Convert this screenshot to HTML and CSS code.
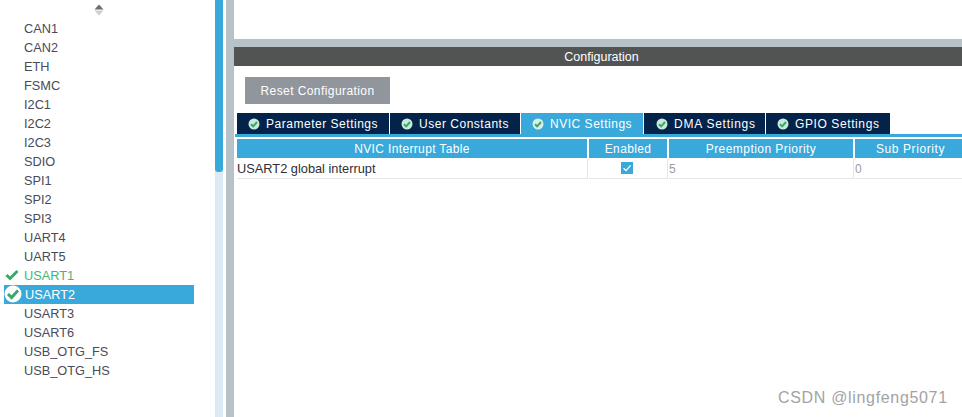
FILE: index.html
```html
<!DOCTYPE html>
<html lang="en">
<head>
<meta charset="utf-8">
<title>Configuration</title>
<link rel="stylesheet" href="styles.css">
</head>
<body>
<div class="app">
  <aside class="sidebar">
    <div class="sorter">
      <svg width="10" height="12" viewBox="0 0 10 12"><path d="M5 0.5 9.5 5.5H0.5z" fill="#6f6f6f"/><path d="M5 11.5 0.5 6.5h9z" fill="#cfcfcf"/></svg>
    </div>
    <ul class="list">
      <li class="item">CAN1</li>
      <li class="item">CAN2</li>
      <li class="item">ETH</li>
      <li class="item">FSMC</li>
      <li class="item">I2C1</li>
      <li class="item">I2C2</li>
      <li class="item">I2C3</li>
      <li class="item">SDIO</li>
      <li class="item">SPI1</li>
      <li class="item">SPI2</li>
      <li class="item">SPI3</li>
      <li class="item">UART4</li>
      <li class="item">UART5</li>
      <li class="item ok">
        <svg class="tick" width="14" height="12" viewBox="0 0 14 12"><path d="M1.5 6 5 9.5 12.5 2" fill="none" stroke="#3aa76d" stroke-width="3"/></svg>
        USART1
      </li>
      <li class="item selected">
        <svg class="badge" width="18" height="18" viewBox="0 0 18 18"><circle cx="9" cy="9" r="8.5" fill="#fff"/><path d="M4 9 7.6 12.6 14 5.6" fill="none" stroke="#3aa76d" stroke-width="3"/></svg>
        USART2
      </li>
      <li class="item">USART3</li>
      <li class="item">USART6</li>
      <li class="item">USB_OTG_FS</li>
      <li class="item">USB_OTG_HS</li>
    </ul>
  </aside>
  <div class="scrolltrack"><div class="scrollthumb"></div></div>
  <div class="gutter"></div>
  <div class="divider"></div>
  <main class="main">
    <div class="top"></div>
    <div class="band"></div>
    <h1 class="title">Configuration</h1>
    <div class="actions"><button class="reset">Reset Configuration</button></div>
    <nav class="tabs">
      <div class="tab w152"><svg class="tabicon" width="12" height="12" viewBox="0 0 12 12"><circle cx="6" cy="6" r="5.5" fill="#c9ead8"/><path d="M3 6.2 5.2 8.3 9 4" fill="none" stroke="#3aa76d" stroke-width="2"/></svg>Parameter Settings</div>
      <div class="tab w130"><svg class="tabicon" width="12" height="12" viewBox="0 0 12 12"><circle cx="6" cy="6" r="5.5" fill="#c9ead8"/><path d="M3 6.2 5.2 8.3 9 4" fill="none" stroke="#3aa76d" stroke-width="2"/></svg>User Constants</div>
      <div class="tab active w122"><svg class="tabicon" width="12" height="12" viewBox="0 0 12 12"><circle cx="6" cy="6" r="5.5" fill="#d9f0e4"/><path d="M3 6.2 5.2 8.3 9 4" fill="none" stroke="#3aa76d" stroke-width="2"/></svg>NVIC Settings</div>
      <div class="tab w121"><svg class="tabicon" width="12" height="12" viewBox="0 0 12 12"><circle cx="6" cy="6" r="5.5" fill="#c9ead8"/><path d="M3 6.2 5.2 8.3 9 4" fill="none" stroke="#3aa76d" stroke-width="2"/></svg>DMA Settings</div>
      <div class="tab w124"><svg class="tabicon" width="12" height="12" viewBox="0 0 12 12"><circle cx="6" cy="6" r="5.5" fill="#c9ead8"/><path d="M3 6.2 5.2 8.3 9 4" fill="none" stroke="#3aa76d" stroke-width="2"/></svg>GPIO Settings</div>
    </nav>
    <div class="tabline"></div>
    <div class="table">
      <div class="th">NVIC Interrupt Table</div>
      <div class="th">Enabled</div>
      <div class="th wide">Preemption Priority</div>
      <div class="th sub">Sub Priority</div>
      <div class="td name">USART2 global interrupt</div>
      <div class="td center"><span class="check"><svg width="12" height="12" viewBox="0 0 12 12"><path d="M2.5 6.3 5 8.6 9.6 3.4" fill="none" stroke="#fff" stroke-width="1.3"/></svg></span></div>
      <div class="td num">5</div>
      <div class="td num">0</div>
    </div>
  </main>
</div>
<div class="watermark">CSDN @lingfeng5071</div>
</body>
</html>
```
FILE: styles.css
```css
* { box-sizing: border-box; }
html, body { margin: 0; padding: 0; height: 417px; overflow: hidden; background: #fff; }
body { font-family: "Liberation Sans", Arial, sans-serif; font-size: 12px; color: #4a4a58; }
.app { display: flex; height: 417px; }
.sidebar { width: 215px; flex: none; padding: 4px 21px 0 4px; }
.sorter { height: 12px; margin-bottom: 3px; display: flex; justify-content: center; }
.sorter svg { display: block; }
.list { list-style: none; margin: 0; padding: 0; }
.item { position: relative; height: 19px; line-height: 19px; padding: 0 0 0 20px; font-size: 12.75px; white-space: nowrap; }
.ok { color: #3fb57c; }
.tick { position: absolute; left: 1px; top: 3px; }
.selected { background: #39a9dc; color: #fff; padding-left: 21px; }
.badge { position: absolute; left: 0; top: 0; }
.scrolltrack { width: 8px; flex: none; background: #dceaf6; }
.scrollthumb { height: 172px; background: #39a9dc; border-radius: 0 0 3px 3px; }
.gutter { width: 3px; flex: none; }
.divider { width: 8px; flex: none; background: #b7c2c8; }
.main { flex: 1; min-width: 0; }
.top { height: 39px; }
.band { height: 8px; background: #b7c2c8; }
.title { margin: 0; height: 19px; line-height: 19px; padding: 1px 0 0 7px; background: #525453; color: #fff; font-size: 12.5px; font-weight: 400; text-align: center; }
.actions { padding: 11px 0 9px 11px; }
.reset { display: block; width: 145px; height: 27px; border: 0; padding: 0; background: #90969c; color: #fff; font: 12px "Liberation Sans", Arial, sans-serif; letter-spacing: 0.42px; }
.tabs { display: flex; gap: 1px; height: 21px; padding-left: 3px; }
.tab { display: flex; align-items: center; padding-left: 11px; background: #03234b; color: #fff; letter-spacing: 0.52px; white-space: nowrap; }
.tab.active { background: #39a9dc; }
.tabicon { margin-right: 6px; flex: none; }
.w152 { width: 152px; }
.w130 { width: 130px; }
.w122 { width: 122px; }
.w121 { width: 121px; padding-left: 12px; letter-spacing: 0.76px; }
.w124 { width: 124px; letter-spacing: 0.6px; }
.tabline { height: 3px; margin-left: 1px; background: #39a9dc; }
.table { display: grid; grid-template-columns: 350px 78px 184px 107px; column-gap: 2px; margin: 2px 0 0 3px; }
.th { height: 19px; line-height: 19px; padding-top: 1px; background: #39a9dc; color: #fff; text-align: center; letter-spacing: 0.35px; }
.wide { letter-spacing: 0.45px; }
.sub { letter-spacing: 0.6px; padding-left: 4px; }
.td { height: 21px; line-height: 20px; padding-top: 1px; border-bottom: 1px solid #e3e6e8; box-shadow: 1px 0 0 #e3e6e8; color: #9a9aa6; }
.name { color: #2e2e3c; font-size: 12.8px; }
.center { display: flex; justify-content: center; padding: 4px 2px 0 0; }
.check { display: block; width: 12px; height: 12px; background: #39a9dc; }
.check svg { display: block; }
.watermark { position: absolute; left: 778px; top: 389px; color: #a3a3a3; font-size: 16px; letter-spacing: 0.67px; }
```
